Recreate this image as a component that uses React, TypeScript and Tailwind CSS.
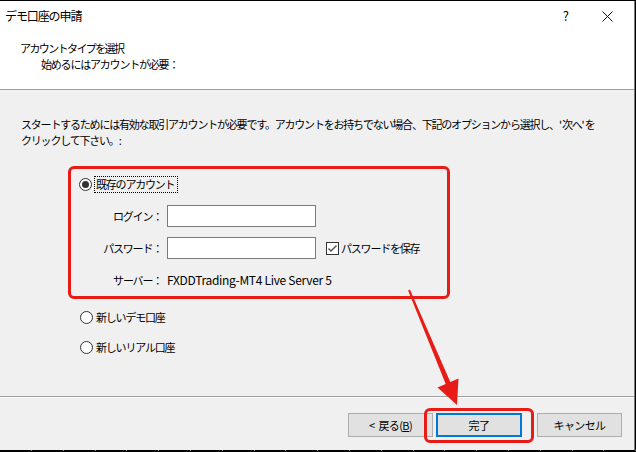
import React from "react";

const font = "[font-family:'Noto_Sans_CJK_JP','Noto_Sans',sans-serif]";

function Radio({ checked }: { checked?: boolean }) {
  return (
    <span className="flex h-[13px] w-[13px] shrink-0 items-center justify-center rounded-full border border-[#333] bg-white">
      {checked && <span className="h-[7px] w-[7px] rounded-full bg-[#333]" />}
    </span>
  );
}

export default function App() {
  const ticks = Array.from({ length: 20 }, (_, i) => i);
  return (
    <div className={`relative h-[452px] w-[636px] overflow-hidden bg-black text-[11px] leading-[16px] tracking-[-1.2px] text-black ${font}`}>
      <div className="h-[1px] bg-black" />
      <div className="flex h-[449px] w-[635px] flex-col border-r border-[#7a7a7a] bg-[#f0f0f0]">
        {/* title bar */}
        <div className="flex h-[30px] items-center bg-white">
          <span className="pl-[5px] text-[12px] tracking-[-1.1px]">デモ口座の申請</span>
          <span className="ml-auto mr-[33px] text-[13px] tracking-normal">?</span>
          <svg width="11" height="11" viewBox="0 0 11 11" className="mr-[21px]">
            <path d="M0.5 0.5 L10.5 10.5 M10.5 0.5 L0.5 10.5" stroke="#111" strokeWidth="1" />
          </svg>
        </div>
        {/* header */}
        <div className="h-[58px] bg-white pt-[9px]">
          <div className="pl-[20px] tracking-[-1.6px]">アカウントタイプを選択</div>
          <div className="pl-[41px]">始めるにはアカウントが必要：</div>
        </div>
        <div className="h-[1px] bg-[#a0a0a0]" />
        {/* body */}
        <div className="h-[306px] pt-[26px]">
          <p className="whitespace-nowrap pl-[21px]">
            スタートするためには有効な取引アカウントが必要です。アカウントをお持ちでない場合、下記のオプションから選択し、<span className="tracking-normal">'</span>次へ<span className="tracking-normal">'</span>を
            <br />
            クリックして下さい。:
          </p>
          <div className="ml-[68px] mt-[18px] h-[133px] w-[382px] rounded-[6px] border-[3px] border-[#e81c17] pt-[7px]">
            <div className="flex h-[17px] items-center">
              <span className="ml-[8px]"><Radio checked /></span>
              <span className="ml-[2px] border border-dotted border-black pl-[1px] pr-[3px] leading-[15px]">既存のアカウント</span>
            </div>
            <div className="mt-[12px] flex items-center">
              <span className="w-[91px] text-right">ログイン：</span>
              <span className="ml-[5px] h-[22px] w-[149px] border border-[#7a7a7a] bg-white" />
            </div>
            <div className="mt-[10px] flex items-center">
              <span className="w-[91px] text-right">パスワード：</span>
              <span className="ml-[5px] h-[22px] w-[149px] border border-[#7a7a7a] bg-white" />
              <span className="ml-[10px] flex h-[13px] w-[13px] items-center justify-center border border-[#333] bg-white">
                <svg width="11" height="11" viewBox="0 0 11 11">
                  <path d="M1.5 5.5 L4 8 L9.5 2.5" stroke="#555" strokeWidth="1.5" fill="none" />
                </svg>
              </span>
              <span className="ml-[2px]">パスワードを保存</span>
            </div>
            <div className="mt-[13px] flex items-center">
              <span className="w-[91px] text-right">サーバー：</span>
              <span className="ml-[5px] text-[12px] tracking-[-0.3px]">FXDDTrading-MT4 Live Server 5</span>
            </div>
          </div>
          <div className="ml-[80px] mt-[10px] flex h-[16px] items-center">
            <Radio />
            <span className="ml-[3px]">新しいデモ口座</span>
          </div>
          <div className="ml-[80px] mt-[14px] flex h-[16px] items-center">
            <Radio />
            <span className="ml-[3px]">新しいリアル口座</span>
          </div>
        </div>
        <div className="h-[1px] bg-[#a0a0a0]" />
        <div className="h-[1px] bg-white" />
        {/* footer */}
        <div className="flex flex-1 items-start pl-[348px] pt-[15px] tracking-[-0.6px]">
          <button className="flex h-[24px] w-[85px] items-center justify-center border border-[#adadad] bg-[#e1e1e1]">
            <span className="mr-[4px]">&lt;</span>戻る(<span className="underline">B</span>)
          </button>
          <button className="ml-[3px] flex h-[24px] w-[86px] items-center justify-center border-2 border-[#0078d7] bg-[#e1e1e1]">
            完了
          </button>
          <button className="ml-[15px] flex h-[24px] w-[85px] items-center justify-center border border-[#adadad] bg-[#e1e1e1]">
            キャンセル
          </button>
        </div>
      </div>
      <div className="flex h-[2px] bg-black">
        {ticks.map((i) => (
          <span key={i} className="ml-[31px] h-[1px] w-[1px] bg-[#888]" />
        ))}
      </div>
      {/* annotations */}
      <div className="absolute left-[424px] top-[408px] h-[35px] w-[110px] rounded-[6px] border-[3px] border-[#e81c17]" />
      <svg className="absolute left-0 top-0" width="636" height="452" viewBox="0 0 636 452">
        <polygon
          points="408.1,290.4 409.9,289.6 450.3,382 458.5,378.5 457,405 437.5,387.5 445.7,384"
          fill="#e81c17"
        />
      </svg>
    </div>
  );
}
